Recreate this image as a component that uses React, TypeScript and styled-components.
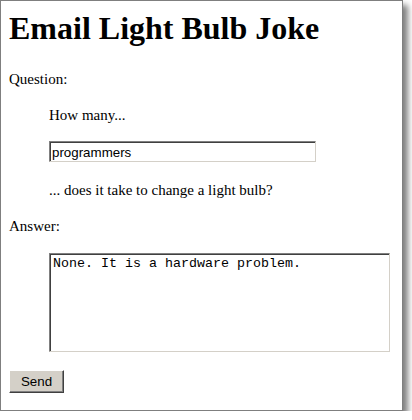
import React from "react";
import styled, { createGlobalStyle } from "styled-components";

const GlobalStyle = createGlobalStyle`
  html, body {
    margin: 0;
    padding: 0;
    background: #ffffff;
    overflow: hidden;
  }
`;

const Window = styled.div`
  box-sizing: border-box;
  width: 403px;
  height: 411px;
  background: #ffffff;
  border: 1px solid #7f7f7f;
  box-shadow: 5px 5px 6px rgba(0, 0, 0, 0.5);
  padding: 8px;
  font-family: "Liberation Serif", "Times New Roman", serif;
  font-size: 15px;
  color: #000000;
  display: flex;
  flex-direction: column;
  gap: 18px;
`;

const Heading = styled.h1`
  margin: 1px 0 5px 0;
  font-size: 32px;
  line-height: 37px;
  font-weight: bold;
`;

const Label = styled.div`
  line-height: 18px;
`;

const Indent = styled.div`
  padding-left: 40px;
  display: flex;
  flex-direction: column;
  align-items: flex-start;
  gap: 18px;
`;

const Prompt = styled.p`
  margin: 0;
  line-height: 18px;
`;

const TextInput = styled.input`
  box-sizing: border-box;
  width: 267px;
  height: 21px;
  margin: -1px 0 1px 0;
  padding: 1px 2px 0 2px;
  border: 1px solid;
  border-color: #808080 #d4d0c8 #d4d0c8 #808080;
  box-shadow: inset 1px 1px 0 #404040;
  font-family: "Liberation Sans", Arial, sans-serif;
  font-size: 13.33px;
  color: #000000;
  background: #ffffff;
  outline: none;
`;

const AnswerBox = styled.textarea`
  box-sizing: border-box;
  width: 341px;
  height: 99px;
  margin: 0;
  padding: 2px 3px;
  border: 1px solid;
  border-color: #808080 #d4d0c8 #d4d0c8 #808080;
  box-shadow: inset 1px 1px 0 #404040;
  font-family: "Liberation Mono", "Courier New", monospace;
  font-size: 13.33px;
  line-height: 15px;
  color: #000000;
  background: #ffffff;
  resize: none;
  outline: none;
`;

const SendButton = styled.button`
  align-self: flex-start;
  box-sizing: border-box;
  width: 55px;
  height: 23px;
  margin: 0;
  padding: 0;
  background: #d4d0c8;
  border: 1px solid;
  border-color: #ffffff #404040 #404040 #ffffff;
  box-shadow: inset -1px -1px 0 #808080;
  font-family: "Liberation Sans", Arial, sans-serif;
  font-size: 13.33px;
  color: #000000;
`;

export default function App() {
  return (
    <>
      <GlobalStyle />
      <Window>
        <Heading>Email Light Bulb Joke</Heading>
        <Label>Question:</Label>
        <Indent>
          <Prompt>How many...</Prompt>
          <TextInput type="text" defaultValue="programmers" />
          <Prompt>... does it take to change a light bulb?</Prompt>
        </Indent>
        <Label>Answer:</Label>
        <Indent>
          <AnswerBox defaultValue="None. It is a hardware problem." />
        </Indent>
        <SendButton type="button">Send</SendButton>
      </Window>
    </>
  );
}
